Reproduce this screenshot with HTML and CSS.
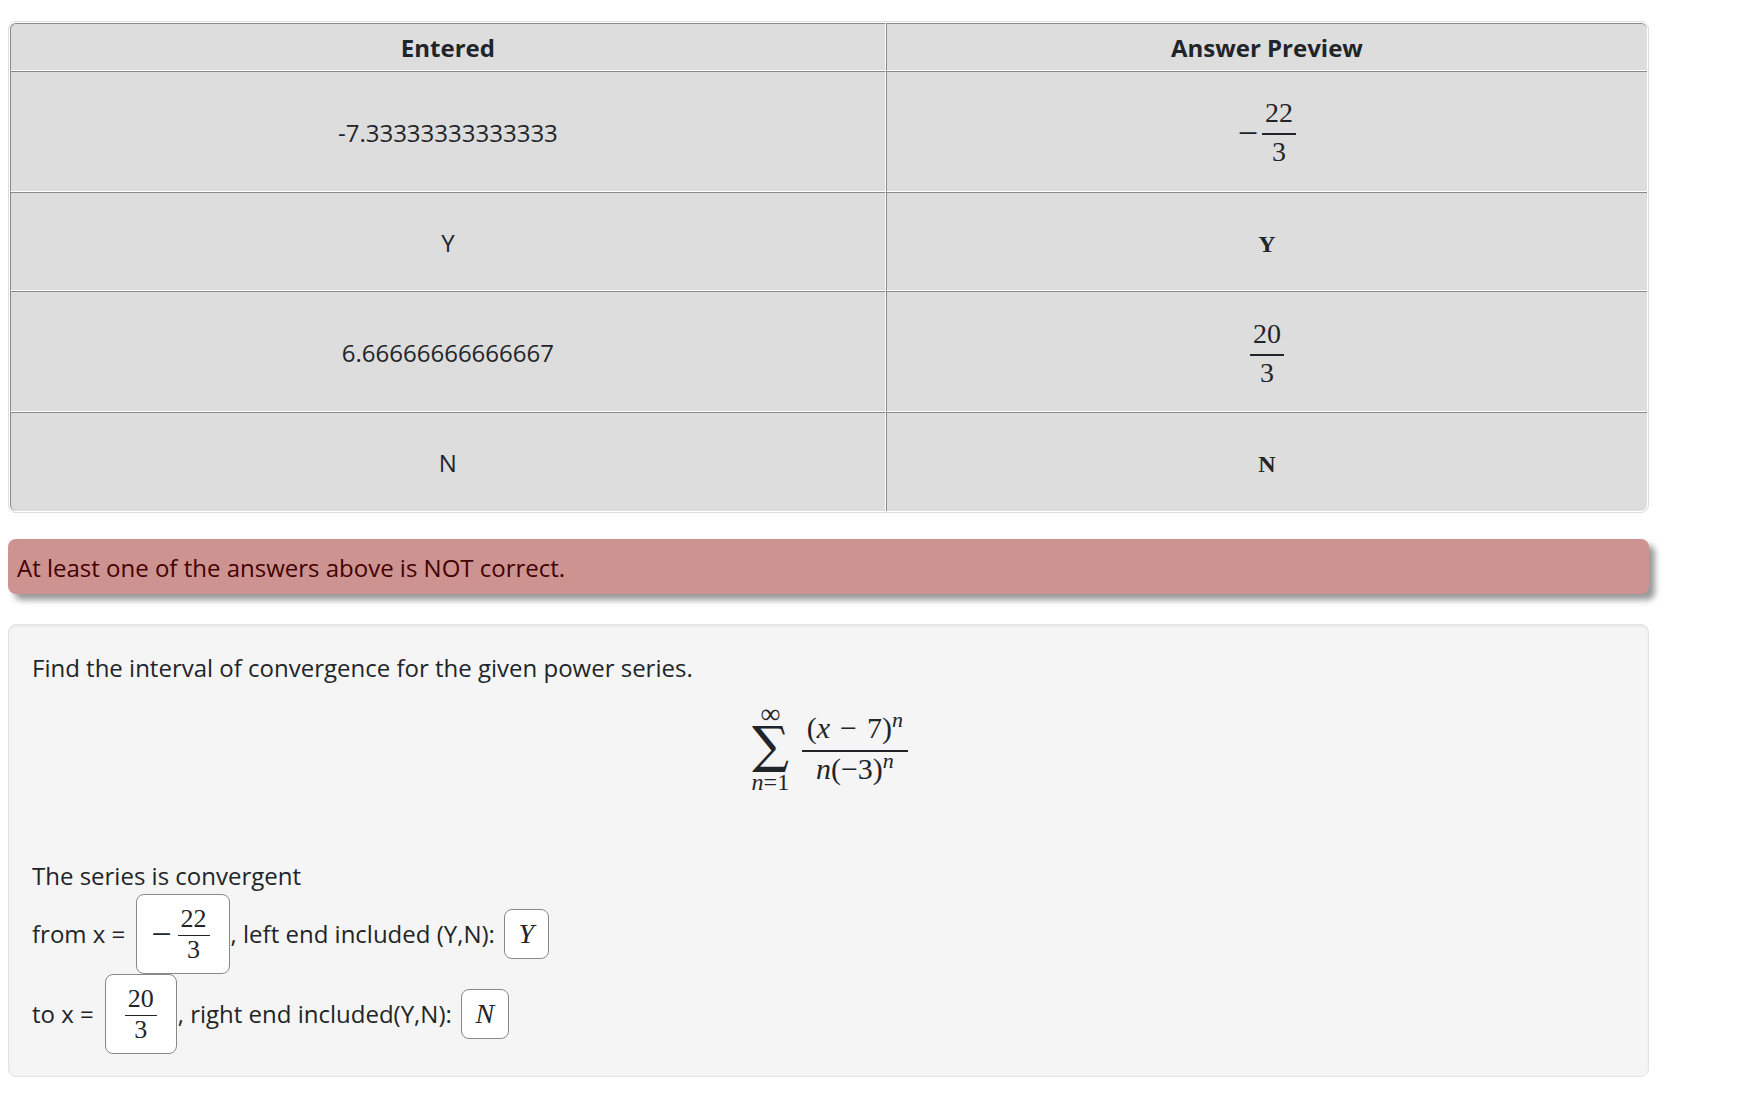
FILE: index.html
```
<!DOCTYPE html>
<html lang="en">
<head>
    <meta charset="utf-8">
    <title>Power Series</title>
    <link rel="stylesheet" href="styles.css">
</head>
<body>
    <!-- results of the last submission -->
    <table class="results">
        <thead>
            <tr>
                <th class="entered">Entered</th>
                <th>Answer Preview</th>
            </tr>
        </thead>
        <tbody>
            <tr class="tall">
                <td>-7.33333333333333</td>
                <td>
                    <span class="math"><span class="neg">−</span><span class="frac"><span class="num">22</span><span class="den">3</span></span></span>
                </td>
            </tr>
            <tr>
                <td>Y</td>
                <td class="tt">Y</td>
            </tr>
            <tr class="tall">
                <td>6.66666666666667</td>
                <td>
                    <span class="math"><span class="frac"><span class="num">20</span><span class="den">3</span></span></span>
                </td>
            </tr>
            <tr>
                <td>N</td>
                <td class="tt">N</td>
            </tr>
        </tbody>
    </table>

    <div class="alert" role="alert">At least one of the answers above is NOT correct.</div>

    <form class="problem">
        <p>Find the interval of convergence for the given power series.</p>
        <div class="math display">
            <span class="sum">
                <span class="limit infinity">∞</span>
                <span class="sigma">∑</span>
                <span class="limit"><i>n</i>=1</span>
            </span>
            <span class="frac">
                <span class="num">(<i>x</i><span class="op">−</span>7)<sup>n</sup></span>
                <span class="den"><i>n</i>(−3)<sup>n</sup></span>
            </span>
        </div>
        <p>The series is convergent</p>
        <div class="line">
            <span id="fromLabel">from x =</span>
            <span class="field math" role="textbox" contenteditable="true" spellcheck="false" aria-labelledby="fromLabel"><span class="neg">−</span><span class="frac"><span class="num">22</span><span class="den">3</span></span></span>
            <label for="leftEnd">, left end included (Y,N):</label>
            <input class="letter" type="text" id="leftEnd" name="leftEnd" value="Y">
        </div>
        <div class="line">
            <span id="toLabel">to x =</span>
            <span class="field math" role="textbox" contenteditable="true" spellcheck="false" aria-labelledby="toLabel"><span class="frac"><span class="num">20</span><span class="den">3</span></span></span>
            <label for="rightEnd">, right end included(Y,N):</label>
            <input class="letter wide" type="text" id="rightEnd" name="rightEnd" value="N">
        </div>
    </form>
</body>
</html>
```
FILE: styles.css
```
* {
    box-sizing: border-box;
}

body {
    margin: 0;
    padding: 21px 95px 24px 8px;
    background-color: #fff;
    color: #212529;
    font-family: "Open Sans", "Noto Sans", sans-serif;
    font-size: 24px;
    line-height: 36px;
}

p {
    margin: 0;
}

/* Results table */
.results {
    width: 100%;
    table-layout: fixed;
    border-collapse: separate;
    border-spacing: 0;
    padding: 1px;
    border: 1px solid #ddd;
    border-radius: 8px;
}

.results th, .results td {
    height: 99px;
    padding: 2px 0 0;
    border: 1px solid;
    border-color: #888 #fff #fff #888;
    background-color: #ddd;
    text-align: center;
    vertical-align: middle;
}

.results th {
    height: 48px;
}

.results .tall td {
    height: 121px;
}

.results .entered {
    width: 53.5%;
}

.results tr > :last-child {
    border-right: none;
}

.results tr:last-child td {
    border-bottom: none;
}

.results th:first-child {
    border-top-left-radius: 6px;
}

.results th:last-child {
    border-top-right-radius: 6px;
}

.results tr:last-child td:first-child {
    border-bottom-left-radius: 6px;
}

.results tr:last-child td:last-child {
    border-bottom-right-radius: 6px;
}

.results .tt {
    padding-top: 4px;
    font-family: "Liberation Serif", serif;
    font-weight: bold;
}

/* Message bar */
.alert {
    margin: 26px 0 30px;
    padding: 11px 9px 8px;
    border-radius: 8px;
    background-color: #cd9391;
    box-shadow: 6px 6px 6px #999;
    color: #400;
}

/* Math */
.math {
    display: inline-flex;
    align-items: center;
    font-family: "Liberation Serif", serif;
    font-size: 28px;
    line-height: 32px;
}

.frac {
    display: inline-flex;
    flex-direction: column;
    align-items: stretch;
    text-align: center;
}

.num {
    padding: 0 3px 4px;
    border-bottom: 2px solid;
}

.den {
    padding: 1px 3px 0;
}

.neg {
    margin-right: 4px;
    font-size: 36px;
}

.op {
    margin: 0 10px;
}

sup {
    font-size: 22px;
    font-style: italic;
    line-height: 0;
}

.display {
    display: flex;
    justify-content: center;
    gap: 10px;
    padding: 18px 0 66px;
    font-size: 30px;
}

.display .num {
    padding: 0 5px 6px;
}

.sum {
    display: flex;
    flex-direction: column;
    align-items: center;
}

.limit {
    font-size: 24px;
    line-height: 20px;
}

.infinity {
    font-size: 28px;
}

.sigma {
    font-family: "DejaVu Math TeX Gyre", "Liberation Serif", serif;
    font-size: 44px;
    line-height: 48px;
}

/* Problem */
.problem {
    padding: 25px 23px 22px;
    border: 1px solid #e3e3e3;
    border-radius: 8px;
    background-color: #f5f5f5;
    box-shadow: inset 0 2px 2px rgba(0, 0, 0, 0.05);
}

.line {
    display: flex;
    align-items: center;
    min-height: 80px;
}

.field, .letter {
    border: 1px solid #888;
    border-radius: 8px;
    background-color: #fff;
    color: #212529;
}

.field {
    height: 80px;
    margin: 0 1px 0 11px;
    padding: 0 19px;
    font-size: 26px;
    line-height: 28px;
}

.field .num {
    padding: 0 3px 2px;
    border-bottom-width: 1px;
}

.field .den {
    padding: 0 3px;
}

.field .neg {
    margin: 0 6px 0 -5px;
}

.letter {
    width: 45px;
    height: 50px;
    margin-left: 9px;
    padding: 0;
    font-family: "Liberation Serif", serif;
    font-size: 28px;
    font-style: italic;
    text-align: center;
}

.wide {
    width: 48px;
}
```
